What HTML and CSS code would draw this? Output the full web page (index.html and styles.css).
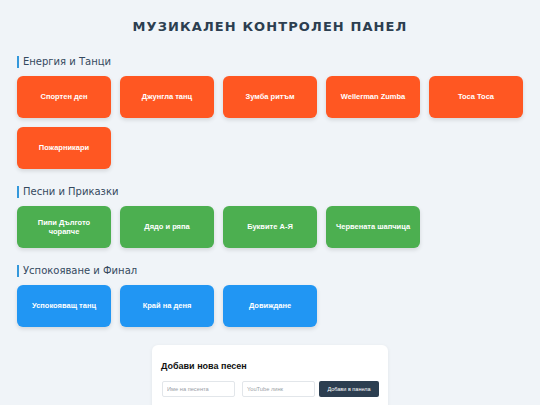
FILE: index.html
```html
<!DOCTYPE html>
<html lang="bg">
<head>
<meta charset="utf-8">
<title>Музикален контролен панел</title>
<link rel="stylesheet" href="styles.css">
</head>
<body>
<h1 class="title">МУЗИКАЛЕН КОНТРОЛЕН ПАНЕЛ</h1>

<section class="section">
  <h2 class="section-title">Енергия и Танци</h2>
  <div class="grid">
    <button class="song orange">Спортен ден</button>
    <button class="song orange">Джунгла танц</button>
    <button class="song orange">Зумба ритъм</button>
    <button class="song orange">Wellerman Zumba</button>
    <button class="song orange">Toca Toca</button>
    <button class="song orange">Пожарникари</button>
  </div>
</section>

<section class="section">
  <h2 class="section-title">Песни и Приказки</h2>
  <div class="grid">
    <button class="song green">Пипи Дългото чорапче</button>
    <button class="song green">Дядо и ряпа</button>
    <button class="song green">Буквите А-Я</button>
    <button class="song green">Червената шапчица</button>
  </div>
</section>

<section class="section">
  <h2 class="section-title">Успокояване и Финал</h2>
  <div class="grid">
    <button class="song blue">Успокояващ танц</button>
    <button class="song blue">Край на деня</button>
    <button class="song blue">Довиждане</button>
  </div>
</section>

<div class="card">
  <h3 class="card-title">Добави нова песен</h3>
  <div class="form-row">
    <input class="field" type="text" placeholder="Име на песента">
    <input class="field field-second" type="text" placeholder="YouTube линк">
    <button class="add-btn">Добави в панела</button>
  </div>
  <div class="spacer"></div>
</div>
</body>
</html>
```

FILE: styles.css
```css
html, body {
  margin: 0;
  padding: 0;
}

body {
  background: #f0f4f8;
  padding: 18px 17px 40px;
  font-family: "DejaVu Sans", Verdana, sans-serif;
}

.title {
  margin: 0 0 21px;
  font-size: 13px;
  line-height: 17px;
  font-weight: bold;
  text-align: center;
  letter-spacing: 1.1px;
  color: #2c3e50;
}

.section {
  margin-bottom: 17px;
}

.section-title {
  margin: 0 0 8px;
  font-size: 10px;
  line-height: 12px;
  font-weight: normal;
  color: #34495e;
  border-left: 2.5px solid #3498db;
  padding-left: 4px;
}

.grid {
  display: grid;
  grid-template-columns: repeat(auto-fill, minmax(90px, 1fr));
  gap: 9px;
}

.song {
  height: 42px;
  border: none;
  border-radius: 6px;
  color: #ffffff;
  font-family: "Liberation Sans", Arial, sans-serif;
  font-size: 7.5px;
  line-height: 9.5px;
  font-weight: bold;
  padding: 0 8px;
  box-shadow: 0 2px 4px rgba(0, 0, 0, 0.12);
}

.orange { background: #ff5722; }
.green { background: #4caf50; }
.blue { background: #2196f3; }

.card {
  width: 236px;
  box-sizing: border-box;
  margin: 18px auto 0;
  background: #ffffff;
  border-radius: 6px;
  padding: 10px 9px;
  box-shadow: 0 1px 4px rgba(0, 0, 0, 0.06);
}

.card-title {
  margin: 6px 0 10px;
  font-family: "Liberation Sans", Arial, sans-serif;
  font-size: 9px;
  line-height: 10px;
  font-weight: bold;
  color: #111111;
}

.form-row {
  display: flex;
  gap: 4px;
  padding-left: 1px;
}

.field {
  width: 73px;
  height: 16px;
  box-sizing: border-box;
  border: 1px solid #e2e6ea;
  border-radius: 2px;
  padding: 0 4px;
  font-family: "Liberation Sans", Arial, sans-serif;
  font-size: 5.7px;
  background: #ffffff;
}

.field::placeholder {
  color: #9aa0a6;
}

.field-second {
  margin-left: 3px;
}

.add-btn {
  width: 61px;
  height: 16px;
  border: none;
  border-radius: 2px;
  background: #2c3e50;
  color: #ffffff;
  font-family: "Liberation Sans", Arial, sans-serif;
  font-size: 5.5px;
  padding: 0;
}

.spacer {
  height: 30px;
}
```
